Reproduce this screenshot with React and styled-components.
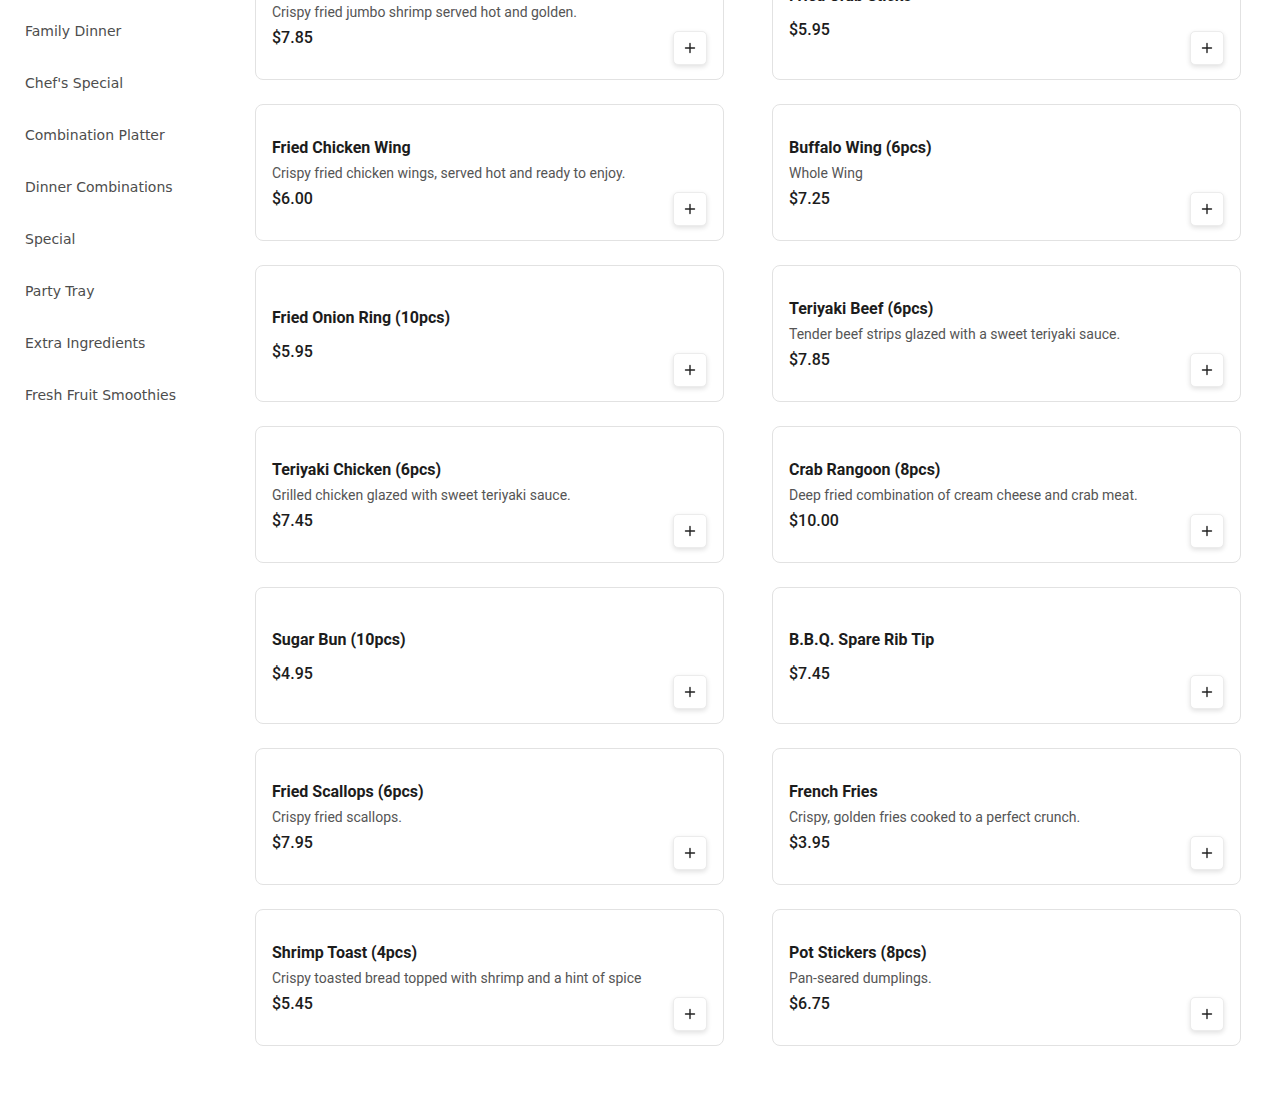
import React from "react";
import styled, { createGlobalStyle } from "styled-components";

const Global = createGlobalStyle`
  html, body { margin: 0; padding: 0; background: #fff; }
  body { font-family: Roboto, "Liberation Sans", sans-serif; }
  * { box-sizing: border-box; }
`;

const Page = styled.div`
  display: flex;
  width: 1270px;
  height: 1110px;
  overflow: hidden;
  background: #fff;
`;

const Sidebar = styled.nav`
  width: 231px;
  flex: none;
  padding: 12px 0 0 25px;
  display: flex;
  flex-direction: column;
`;

const NavItem = styled.a`
  font-family: "DejaVu Sans", Verdana, sans-serif;
  font-size: 14px;
  line-height: 38px;
  height: 52px;
  color: #4d4d4d;
  text-decoration: none;
  cursor: pointer;
`;

const Main = styled.main`
  flex: 1;
  padding: 0 29px 0 24px;
  overflow: hidden;
`;

const Grid = styled.div`
  display: grid;
  grid-template-columns: 469px 469px;
  column-gap: 48px;
  row-gap: 24px;
  margin-top: -57px;
`;

const Card = styled.div`
  height: 137px;
  border: 1px solid #e2e2e2;
  border-radius: 8px;
  background: #fff;
  padding: 16px;
  display: flex;
  align-items: center;
  justify-content: space-between;
`;

const Info = styled.div`
  display: flex;
  flex-direction: column;
  padding-top: ${(p) => (p.$noDesc ? "3px" : "1px")};
`;

const Title = styled.h3`
  margin: 0;
  font-size: 16px;
  line-height: 24px;
  font-weight: 700;
  color: #1c1c1c;
`;

const Desc = styled.p`
  margin: 3px 0 0;
  font-size: 14px;
  line-height: 20px;
  color: #555;
`;

const Price = styled.div`
  margin-top: ${(p) => (p.$noDesc ? "10px" : "4px")};
  font-size: 16px;
  line-height: 24px;
  font-weight: 500;
  color: #1c1c1c;
`;

const AddButton = styled.button`
  align-self: flex-end;
  width: 34px;
  height: 34px;
  margin-bottom: -2px;
  flex: none;
  display: flex;
  align-items: center;
  justify-content: center;
  padding: 0;
  border: 1px solid #ececec;
  border-radius: 5px;
  background: #fff;
  box-shadow: 0 2px 5px rgba(0, 0, 0, 0.12);
  cursor: pointer;
  color: #222;
`;

const Plus = () => (
  <svg width="12" height="12" viewBox="0 0 12 12" fill="none">
    <path d="M6 1.5v9M1.5 6h9" stroke="currentColor" strokeWidth="1.4" strokeLinecap="round" />
  </svg>
);

const categories = [
  "Family Dinner",
  "Chef's Special",
  "Combination Platter",
  "Dinner Combinations",
  "Special",
  "Party Tray",
  "Extra Ingredients",
  "Fresh Fruit Smoothies",
];

const items = [
  { name: "Fried Jumbo Shrimp (5pcs)", desc: "Crispy fried jumbo shrimp served hot and golden.", price: "$7.85" },
  { name: "Fried Crab Sticks", price: "$5.95" },
  { name: "Fried Chicken Wing", desc: "Crispy fried chicken wings, served hot and ready to enjoy.", price: "$6.00" },
  { name: "Buffalo Wing (6pcs)", desc: "Whole Wing", price: "$7.25" },
  { name: "Fried Onion Ring (10pcs)", price: "$5.95" },
  { name: "Teriyaki Beef (6pcs)", desc: "Tender beef strips glazed with a sweet teriyaki sauce.", price: "$7.85" },
  { name: "Teriyaki Chicken (6pcs)", desc: "Grilled chicken glazed with sweet teriyaki sauce.", price: "$7.45" },
  { name: "Crab Rangoon (8pcs)", desc: "Deep fried combination of cream cheese and crab meat.", price: "$10.00" },
  { name: "Sugar Bun (10pcs)", price: "$4.95" },
  { name: "B.B.Q. Spare Rib Tip", price: "$7.45" },
  { name: "Fried Scallops (6pcs)", desc: "Crispy fried scallops.", price: "$7.95" },
  { name: "French Fries", desc: "Crispy, golden fries cooked to a perfect crunch.", price: "$3.95" },
  { name: "Shrimp Toast (4pcs)", desc: "Crispy toasted bread topped with shrimp and a hint of spice", price: "$5.45" },
  { name: "Pot Stickers (8pcs)", desc: "Pan-seared dumplings.", price: "$6.75" },
];

export default function App() {
  return (
    <>
      <Global />
      <Page>
        <Sidebar>
          {categories.map((c) => (
            <NavItem key={c}>{c}</NavItem>
          ))}
        </Sidebar>
        <Main>
          <Grid>
            {items.map((it) => (
              <Card key={it.name}>
                <Info $noDesc={!it.desc}>
                  <Title>{it.name}</Title>
                  {it.desc && <Desc>{it.desc}</Desc>}
                  <Price $noDesc={!it.desc}>{it.price}</Price>
                </Info>
                <AddButton aria-label="Add">
                  <Plus />
                </AddButton>
              </Card>
            ))}
          </Grid>
        </Main>
      </Page>
    </>
  );
}
